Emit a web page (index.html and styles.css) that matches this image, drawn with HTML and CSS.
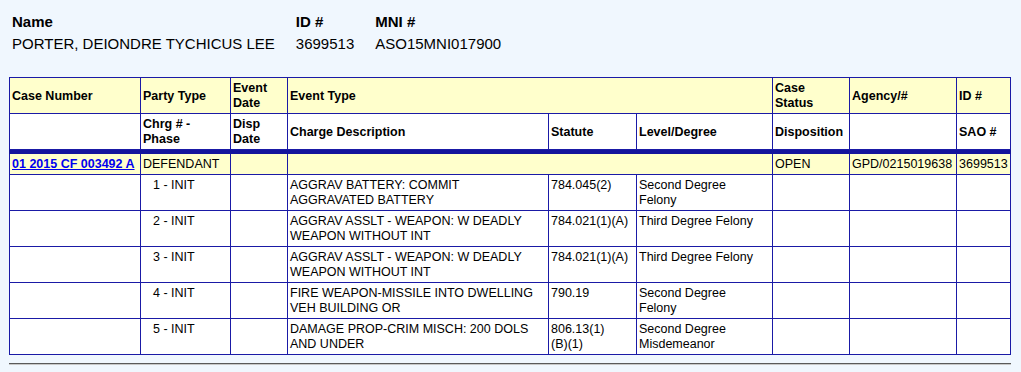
FILE: index.html
```html
<!DOCTYPE html>
<html>
<head>
<meta charset="utf-8">
<link rel="stylesheet" href="styles.css">
</head>
<body>
<div class="page">
  <div class="person">
    <div class="lbl">Name</div>
    <div class="lbl">ID #</div>
    <div class="lbl">MNI #</div>
    <div class="val">PORTER, DEIONDRE TYCHICUS LEE</div>
    <div class="val">3699513</div>
    <div class="val">ASO15MNI017900</div>
  </div>

  <table class="cases">
    <colgroup>
      <col class="c-case">
      <col class="c-party">
      <col class="c-date">
      <col class="c-desc">
      <col class="c-stat">
      <col class="c-level">
      <col class="c-status">
      <col class="c-agency">
      <col class="c-id">
    </colgroup>
    <tr class="head1">
      <th>Case Number</th>
      <th>Party Type</th>
      <th>Event<br>Date</th>
      <th colspan="3">Event Type</th>
      <th>Case<br>Status</th>
      <th>Agency/#</th>
      <th>ID #</th>
    </tr>
    <tr class="head2">
      <th></th>
      <th>Chrg # -<br>Phase</th>
      <th>Disp<br>Date</th>
      <th>Charge Description</th>
      <th>Statute</th>
      <th>Level/Degree</th>
      <th>Disposition</th>
      <th></th>
      <th>SAO #</th>
    </tr>
    <tr class="band"><td colspan="9"></td></tr>
    <tr class="case-row">
      <td><a href="#" class="case-link">01 2015 CF 003492 A</a></td>
      <td>DEFENDANT</td>
      <td></td>
      <td colspan="3"></td>
      <td>OPEN</td>
      <td>GPD/0215019638</td>
      <td>3699513</td>
    </tr>
    <tr class="charge">
      <td></td><td class="phase">1 - INIT</td><td></td>
      <td class="desc">AGGRAV BATTERY: COMMIT AGGRAVATED BATTERY</td>
      <td>784.045(2)</td>
      <td class="level">Second Degree Felony</td>
      <td></td><td></td><td></td>
    </tr>
    <tr class="charge">
      <td></td><td class="phase">2 - INIT</td><td></td>
      <td class="desc">AGGRAV ASSLT - WEAPON: W DEADLY WEAPON WITHOUT INT</td>
      <td>784.021(1)(A)</td>
      <td class="level">Third Degree Felony</td>
      <td></td><td></td><td></td>
    </tr>
    <tr class="charge">
      <td></td><td class="phase">3 - INIT</td><td></td>
      <td class="desc">AGGRAV ASSLT - WEAPON: W DEADLY WEAPON WITHOUT INT</td>
      <td>784.021(1)(A)</td>
      <td class="level">Third Degree Felony</td>
      <td></td><td></td><td></td>
    </tr>
    <tr class="charge">
      <td></td><td class="phase">4 - INIT</td><td></td>
      <td class="desc">FIRE WEAPON-MISSILE INTO DWELLING VEH BUILDING OR</td>
      <td>790.19</td>
      <td class="level">Second Degree Felony</td>
      <td></td><td></td><td></td>
    </tr>
    <tr class="charge">
      <td></td><td class="phase">5 - INIT</td><td></td>
      <td class="desc">DAMAGE PROP-CRIM MISCH: 200 DOLS AND UNDER</td>
      <td>806.13(1)<br>(B)(1)</td>
      <td class="level">Second Degree Misdemeanor</td>
      <td></td><td></td><td></td>
    </tr>
  </table>
  <hr class="rule">
</div>
</body>
</html>
```
FILE: styles.css
```css
html, body {
  margin: 0;
  padding: 0;
  background: #f0f7fe;
}

body {
  font-family: "Liberation Sans", Arial, Helvetica, sans-serif;
  color: #000;
}

.page {
  padding: 11px 0 0 9px;
  width: 1002px;
}

.person {
  display: grid;
  grid-template-columns: auto auto auto;
  justify-content: start;
  column-gap: 21px;
  padding-left: 3px;
  font-size: 15px;
  line-height: 22px;
}

.person .lbl {
  font-weight: bold;
}

.cases {
  margin-top: 22px;
  width: 1002px;
  table-layout: fixed;
  border-collapse: collapse;
  font-size: 12.5px;
  line-height: 15px;
}

.c-case { width: 131px; }
.c-party { width: 90px; }
.c-date { width: 57px; }
.c-desc { width: 261px; }
.c-stat { width: 88px; }
.c-level { width: 136px; }
.c-status { width: 77px; }
.c-agency { width: 107px; }
.c-id { width: 54px; }

.cases th,
.cases td {
  border: 1px solid #1a1aa6;
  padding: 3px 2px 2px 2px;
  text-align: left;
  overflow: hidden;
}

.cases th {
  font-weight: bold;
  vertical-align: middle;
}

.head1 th {
  background: #ffffcc;
}

.head2 th {
  background: #ffffff;
}

.band td {
  height: 3px;
  padding: 0;
  background: #14149c;
  border-color: #14149c;
}

.case-row td {
  background: #ffffcc;
  vertical-align: top;
}

.case-link {
  color: #0000ee;
  font-weight: bold;
  text-decoration: underline;
}

.charge td {
  background: #ffffff;
  vertical-align: top;
  height: 30px;
}

.charge .phase {
  padding-left: 12px;
}

.charge .desc {
  padding-right: 4px;
}

.charge .level {
  padding-right: 12px;
}

.rule {
  margin: 8px 0 0 0;
  border: 0;
  border-top: 1px solid #5a5a5a;
  border-bottom: 1px solid #c8c8c8;
  height: 0;
}
```
